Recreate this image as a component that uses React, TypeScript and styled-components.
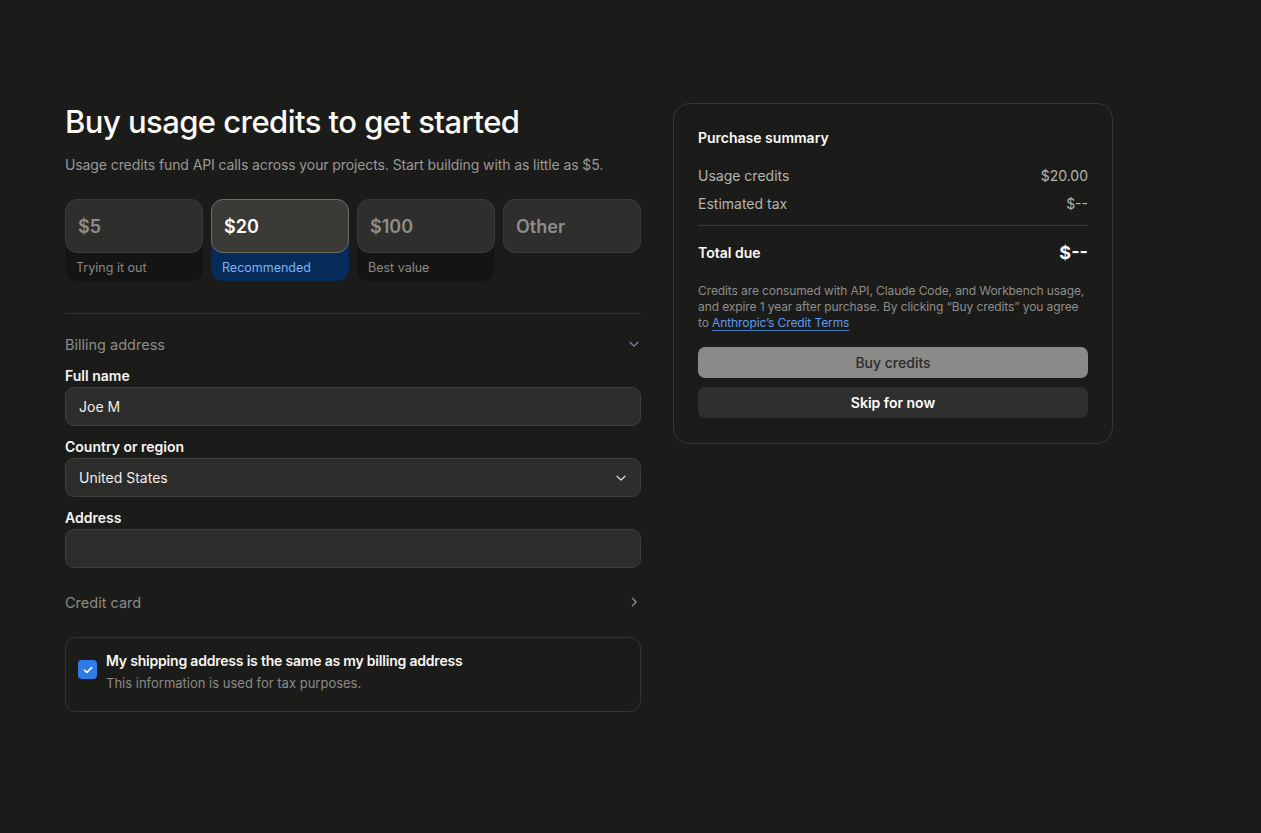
import React from 'react'
import styled, { createGlobalStyle } from 'styled-components'

const GlobalStyle = createGlobalStyle`
  * { box-sizing: border-box; }
  html, body {
    margin: 0;
    background: #1b1b1a;
    font-family: Inter, "Noto Sans", sans-serif;
    color: #f5f4ef;
  }
`

const Page = styled.div`
  min-height: 833px;
  padding: 103px 0 0 65px;
  display: grid;
  grid-template-columns: 576px 440px;
  column-gap: 32px;
  align-items: start;
`

const Main = styled.div`
  display: flex;
  flex-direction: column;
`

const Title = styled.h1`
  margin: 0;
  font-size: 31px;
  font-weight: 500;
  letter-spacing: -0.55px;
  line-height: 38px;
  color: #fbfaf6;
`

const Subtitle = styled.p`
  margin: 15px 0 0;
  font-size: 14px;
  color: #9a9995;
  letter-spacing: -0.1px;
`

const Amounts = styled.div`
  margin-top: 26px;
  display: grid;
  grid-template-columns: repeat(4, 1fr);
  gap: 8px;
  align-items: start;
`

const AmountCard = styled.div<{ $active?: boolean; $hasNote?: boolean }>`
  border-radius: 12px;
  background: ${p => (p.$hasNote ? (p.$active ? '#062b58' : '#141414') : 'transparent')};
  display: flex;
  flex-direction: column;
`

const AmountTop = styled.div<{ $active?: boolean }>`
  height: 54px;
  border-radius: 12px;
  background: ${p => (p.$active ? '#3a3a36' : '#2e2e2c')};
  border: 1px solid ${p => (p.$active ? '#6c6c68' : '#3b3b39')};
  display: flex;
  align-items: center;
  padding: 0 12px;
  font-size: 18px;
  font-weight: 600;
  color: ${p => (p.$active ? '#ffffff' : '#8f8e8a')};
`

const AmountNote = styled.div<{ $active?: boolean }>`
  height: 28px;
  padding: 7px 11px 0;
  font-size: 12.5px;
  color: ${p => (p.$active ? '#7fb2f2' : '#8a8985')};
`

const Divider = styled.hr`
  margin: 32px 0 0;
  border: 0;
  border-top: 1px solid #323230;
`

const SectionRow = styled.div<{ $top: number; $bottom?: number }>`
  display: flex;
  justify-content: space-between;
  align-items: center;
  height: 24px;
  margin: ${p => p.$top}px 0 ${p => p.$bottom ?? 0}px;
  font-size: 14.5px;
  color: #8c8b87;
`

const Label = styled.div`
  font-size: 14px;
  font-weight: 600;
  color: #f7f6f2;
  margin-bottom: 3px;
`

const Field = styled.div`
  display: flex;
  flex-direction: column;
  margin-bottom: 12px;
`

const Input = styled.div`
  height: 39px;
  border-radius: 9px;
  background: #2c2c2b;
  border: 1px solid #3e3e3c;
  display: flex;
  align-items: center;
  justify-content: space-between;
  padding: 0 12px 0 13px;
  font-size: 14px;
  color: #f0efea;
`

const CheckBox = styled.div`
  margin-top: 23px;
  border: 1px solid #333331;
  border-radius: 11px;
  padding: 13px 12px 20px;
  display: flex;
  gap: 9px;
  align-items: flex-start;
`

const Tick = styled.div`
  width: 19px;
  height: 19px;
  margin-top: 9px;
  border-radius: 4px;
  background: #2f7be6;
  display: flex;
  align-items: center;
  justify-content: center;
  flex-shrink: 0;
`

const CheckTitle = styled.div`
  font-size: 14px;
  font-weight: 600;
  letter-spacing: -0.2px;
  color: #f8f7f3;
  line-height: 20px;
`

const CheckSub = styled.div`
  font-size: 13px;
  color: #8c8b87;
  margin-top: 4px;
`

const Summary = styled.aside`
  border: 1px solid #363634;
  border-radius: 16px;
  padding: 24px 24px 25px;
  display: flex;
  flex-direction: column;
`

const SummaryTitle = styled.div`
  font-size: 14px;
  font-weight: 600;
  color: #fbfaf6;
  margin: 1px 0 15px;
`

const SummaryRow = styled.div<{ $total?: boolean }>`
  display: flex;
  justify-content: space-between;
  align-items: center;
  height: ${p => (p.$total ? '26px' : '28px')};
  font-size: 14px;
  color: ${p => (p.$total ? '#fbfaf6' : '#b6b5b0')};
  font-weight: ${p => (p.$total ? 600 : 400)};
`

const TotalValue = styled.span`
  font-size: 18px;
  font-weight: 700;
`

const SummaryDivider = styled.hr`
  margin: 8px 0 13px;
  border: 0;
  border-top: 1px solid #3a3a38;
`

const Fine = styled.p`
  margin: 18px 0 0;
  font-size: 12px;
  line-height: 16px;
  letter-spacing: -0.1px;
  color: #8e8d89;
`

const TermsLink = styled.a`
  color: #5b9cf0;
  text-decoration: underline;
  text-decoration-color: #4a7cc0;
  text-underline-offset: 3px;
`

const Button = styled.button<{ $primary?: boolean }>`
  height: 31px;
  border: 0;
  border-radius: 7px;
  font-family: inherit;
  font-size: 14px;
  font-weight: ${p => (p.$primary ? 500 : 600)};
  background: ${p => (p.$primary ? '#8a8a88' : '#2f2f2e')};
  color: ${p => (p.$primary ? '#2b2b2a' : '#ffffff')};
  margin-top: ${p => (p.$primary ? '16px' : '9px')};
`

const Chevron = ({ dir = 'down', color = '#9a9995' }: { dir?: 'down' | 'right'; color?: string }) => (
  <svg width="14" height="14" viewBox="0 0 16 16" fill="none">
    <path
      d={dir === 'down' ? 'M3.5 6l4.5 4.5L12.5 6' : 'M6 3.5l4.5 4.5L6 12.5'}
      stroke={color}
      strokeWidth="1.4"
      strokeLinecap="round"
      strokeLinejoin="round"
    />
  </svg>
)

const amounts = [
  { value: '$5', note: 'Trying it out' },
  { value: '$20', note: 'Recommended', active: true },
  { value: '$100', note: 'Best value' },
  { value: 'Other' },
]

export default function App() {
  return (
    <>
      <GlobalStyle />
      <Page>
        <Main>
          <Title>Buy usage credits to get started</Title>
          <Subtitle>Usage credits fund API calls across your projects. Start building with as little as $5.</Subtitle>
          <Amounts>
            {amounts.map(a => (
              <AmountCard key={a.value} $active={a.active} $hasNote={!!a.note}>
                <AmountTop $active={a.active}>{a.value}</AmountTop>
                {a.note && <AmountNote $active={a.active}>{a.note}</AmountNote>}
              </AmountCard>
            ))}
          </Amounts>
          <Divider />
          <SectionRow $top={18} $bottom={11}>
            Billing address
            <Chevron color="#6f8fb0" />
          </SectionRow>
          <Field>
            <Label>Full name</Label>
            <Input>Joe M</Input>
          </Field>
          <Field>
            <Label>Country or region</Label>
            <Input>
              United States
              <Chevron color="#e6e5e0" />
            </Input>
          </Field>
          <Field>
            <Label>Address</Label>
            <Input />
          </Field>
          <SectionRow $top={10}>
            Credit card
            <Chevron dir="right" />
          </SectionRow>
          <CheckBox>
            <Tick>
              <svg width="12" height="12" viewBox="0 0 12 12" fill="none">
                <path d="M2.5 6.2l2.4 2.3L9.6 3.6" stroke="#fff" strokeWidth="1.6" strokeLinecap="round" strokeLinejoin="round" />
              </svg>
            </Tick>
            <div>
              <CheckTitle>My shipping address is the same as my billing address</CheckTitle>
              <CheckSub>This information is used for tax purposes.</CheckSub>
            </div>
          </CheckBox>
        </Main>
        <Summary>
          <SummaryTitle>Purchase summary</SummaryTitle>
          <SummaryRow>
            <span>Usage credits</span>
            <span>$20.00</span>
          </SummaryRow>
          <SummaryRow>
            <span>Estimated tax</span>
            <span>$--</span>
          </SummaryRow>
          <SummaryDivider />
          <SummaryRow $total>
            <span>Total due</span>
            <TotalValue>$--</TotalValue>
          </SummaryRow>
          <Fine>
            Credits are consumed with API, Claude Code, and Workbench usage, and expire 1 year after purchase. By
            clicking “Buy credits” you agree to <TermsLink>Anthropic’s Credit Terms</TermsLink>
          </Fine>
          <Button $primary>Buy credits</Button>
          <Button>Skip for now</Button>
        </Summary>
      </Page>
    </>
  )
}
